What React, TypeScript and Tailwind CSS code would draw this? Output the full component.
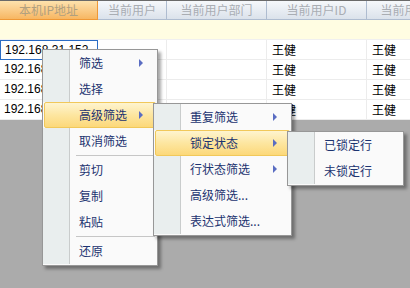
// @ts-nocheck
import React from 'react';

const font = "font-['Noto_Sans_CJK_SC','Liberation_Sans',sans-serif]";

const columns = [
  { title: '本机IP地址', w: 'w-[98px]', active: true },
  { title: '当前用户', w: 'w-[69px]' },
  { title: '当前用户部门', w: 'w-[100px]' },
  { title: '当前用户ID', w: 'w-[100px]' },
  { title: '当前用户名称', w: 'w-[100px]' },
];

const rows = ['192.168.31.152', '192.168.31.153', '192.168.31.154', '192.168.31.155'];

const Arrow = ({ mr }) => (
  <span className={`ml-auto ${mr} w-0 h-0 border-y-[4px] border-y-transparent border-l-[4px] border-l-[#5a6dc2]`} />
);

const MenuItem = ({ label, sub, active }) => {
  if (active) {
    return (
      <div className="flex items-center h-[26px] mx-[1px] rounded-[2px] border border-[#f1c85a] bg-gradient-to-b from-[#fef4cf] via-[#fde6a0] to-[#fcd879]">
        <div className="w-[25px] h-full shrink-0" />
        <span className="pl-[9px] text-[12px] text-[#1c3370] whitespace-nowrap">{label}</span>
        {sub && <Arrow mr="mr-[12px]" />}
      </div>
    );
  }
  return (
    <div className="flex items-center h-[26px]">
      <div className="w-[27px] h-full shrink-0 bg-[#e9eeee] border-r border-[#c9cccc]" />
      <span className="pl-[9px] text-[12px] text-[#1c3370] whitespace-nowrap">{label}</span>
      {sub && <Arrow mr="mr-[14px]" />}
    </div>
  );
};

const Separator = () => (
  <div className="flex items-center h-[3px]">
    <div className="w-[27px] h-full shrink-0 bg-[#e9eeee] border-r border-[#c9cccc]" />
    <div className="flex-1 ml-[6px] mr-[2px] h-px bg-[#c6c6c6]" />
  </div>
);

const Menu = ({ pos, items }) => (
  <div className={`absolute ${pos} bg-[#fafafa] border border-[#979797] pb-[1px] shadow-[3px_3px_3px_rgba(0,0,0,0.35)] leading-none`}>
    {items.map((it, i) =>
      it === '-' ? <Separator key={i} /> : <MenuItem key={i} {...it} />
    )}
  </div>
);

const App = () => {
  return (
    <div className={`relative w-[410px] h-[288px] overflow-hidden bg-[#ababab] ${font}`}>
      <div className="bg-white">
        <div className="flex h-[20px] border-t border-[#6a6a6a] overflow-hidden">
          {columns.map((c, i) => (
            <div
              key={i}
              className={`${c.w} shrink-0 flex items-center justify-center text-[12px] whitespace-nowrap border-r border-b ${
                c.active
                  ? 'bg-gradient-to-b from-[#fde2ad] to-[#f7b661] border-[#ef9836] text-[#b0a080]'
                  : 'bg-gradient-to-b from-[#f6f8fb] to-[#dbe2eb] border-[#aebcd0] text-[#a9adb3]'
              }`}
            >
              {c.title}
            </div>
          ))}
        </div>
        <div className="h-[20px] bg-[#fffde2] border-b border-[#f0f0f0]" />
        {rows.map((ip, r) => (
          <div key={r} className="flex h-[20px] text-[12px] text-black leading-[19px]">
            <div
              className={`w-[98px] shrink-0 pl-[4px] font-['Liberation_Sans',sans-serif] ${
                r === 0 ? 'border border-[#2b6cc4] pl-[3px]' : 'border-r border-b border-[#ececec]'
              }`}
            >
              {ip}
            </div>
            <div className="w-[69px] shrink-0 border-r border-b border-[#ececec]" />
            <div className="w-[100px] shrink-0 border-r border-b border-[#ececec]" />
            <div className="w-[100px] shrink-0 pl-[5px] border-r border-b border-[#ececec]">王健</div>
            <div className="flex-1 pl-[5px] border-b border-[#ececec]">王健</div>
          </div>
        ))}
      </div>

      <Menu
        pos="left-[42px] top-[49px] w-[116px]"
        items={[
          { label: '筛选', sub: true },
          { label: '选择' },
          { label: '高级筛选', sub: true, active: true },
          { label: '取消筛选' },
          '-',
          { label: '剪切' },
          { label: '复制' },
          { label: '粘贴' },
          '-',
          { label: '还原' },
        ]}
      />
      <Menu
        pos="left-[153px] top-[103px] w-[139px]"
        items={[
          { label: '重复筛选', sub: true },
          { label: '锁定状态', sub: true, active: true },
          { label: '行状态筛选', sub: true },
          { label: '高级筛选...' },
          { label: '表达式筛选...' },
        ]}
      />
      <Menu
        pos="left-[287px] top-[131px] w-[117px]"
        items={[{ label: '已锁定行' }, { label: '未锁定行' }]}
      />
    </div>
  );
};

export default App;
